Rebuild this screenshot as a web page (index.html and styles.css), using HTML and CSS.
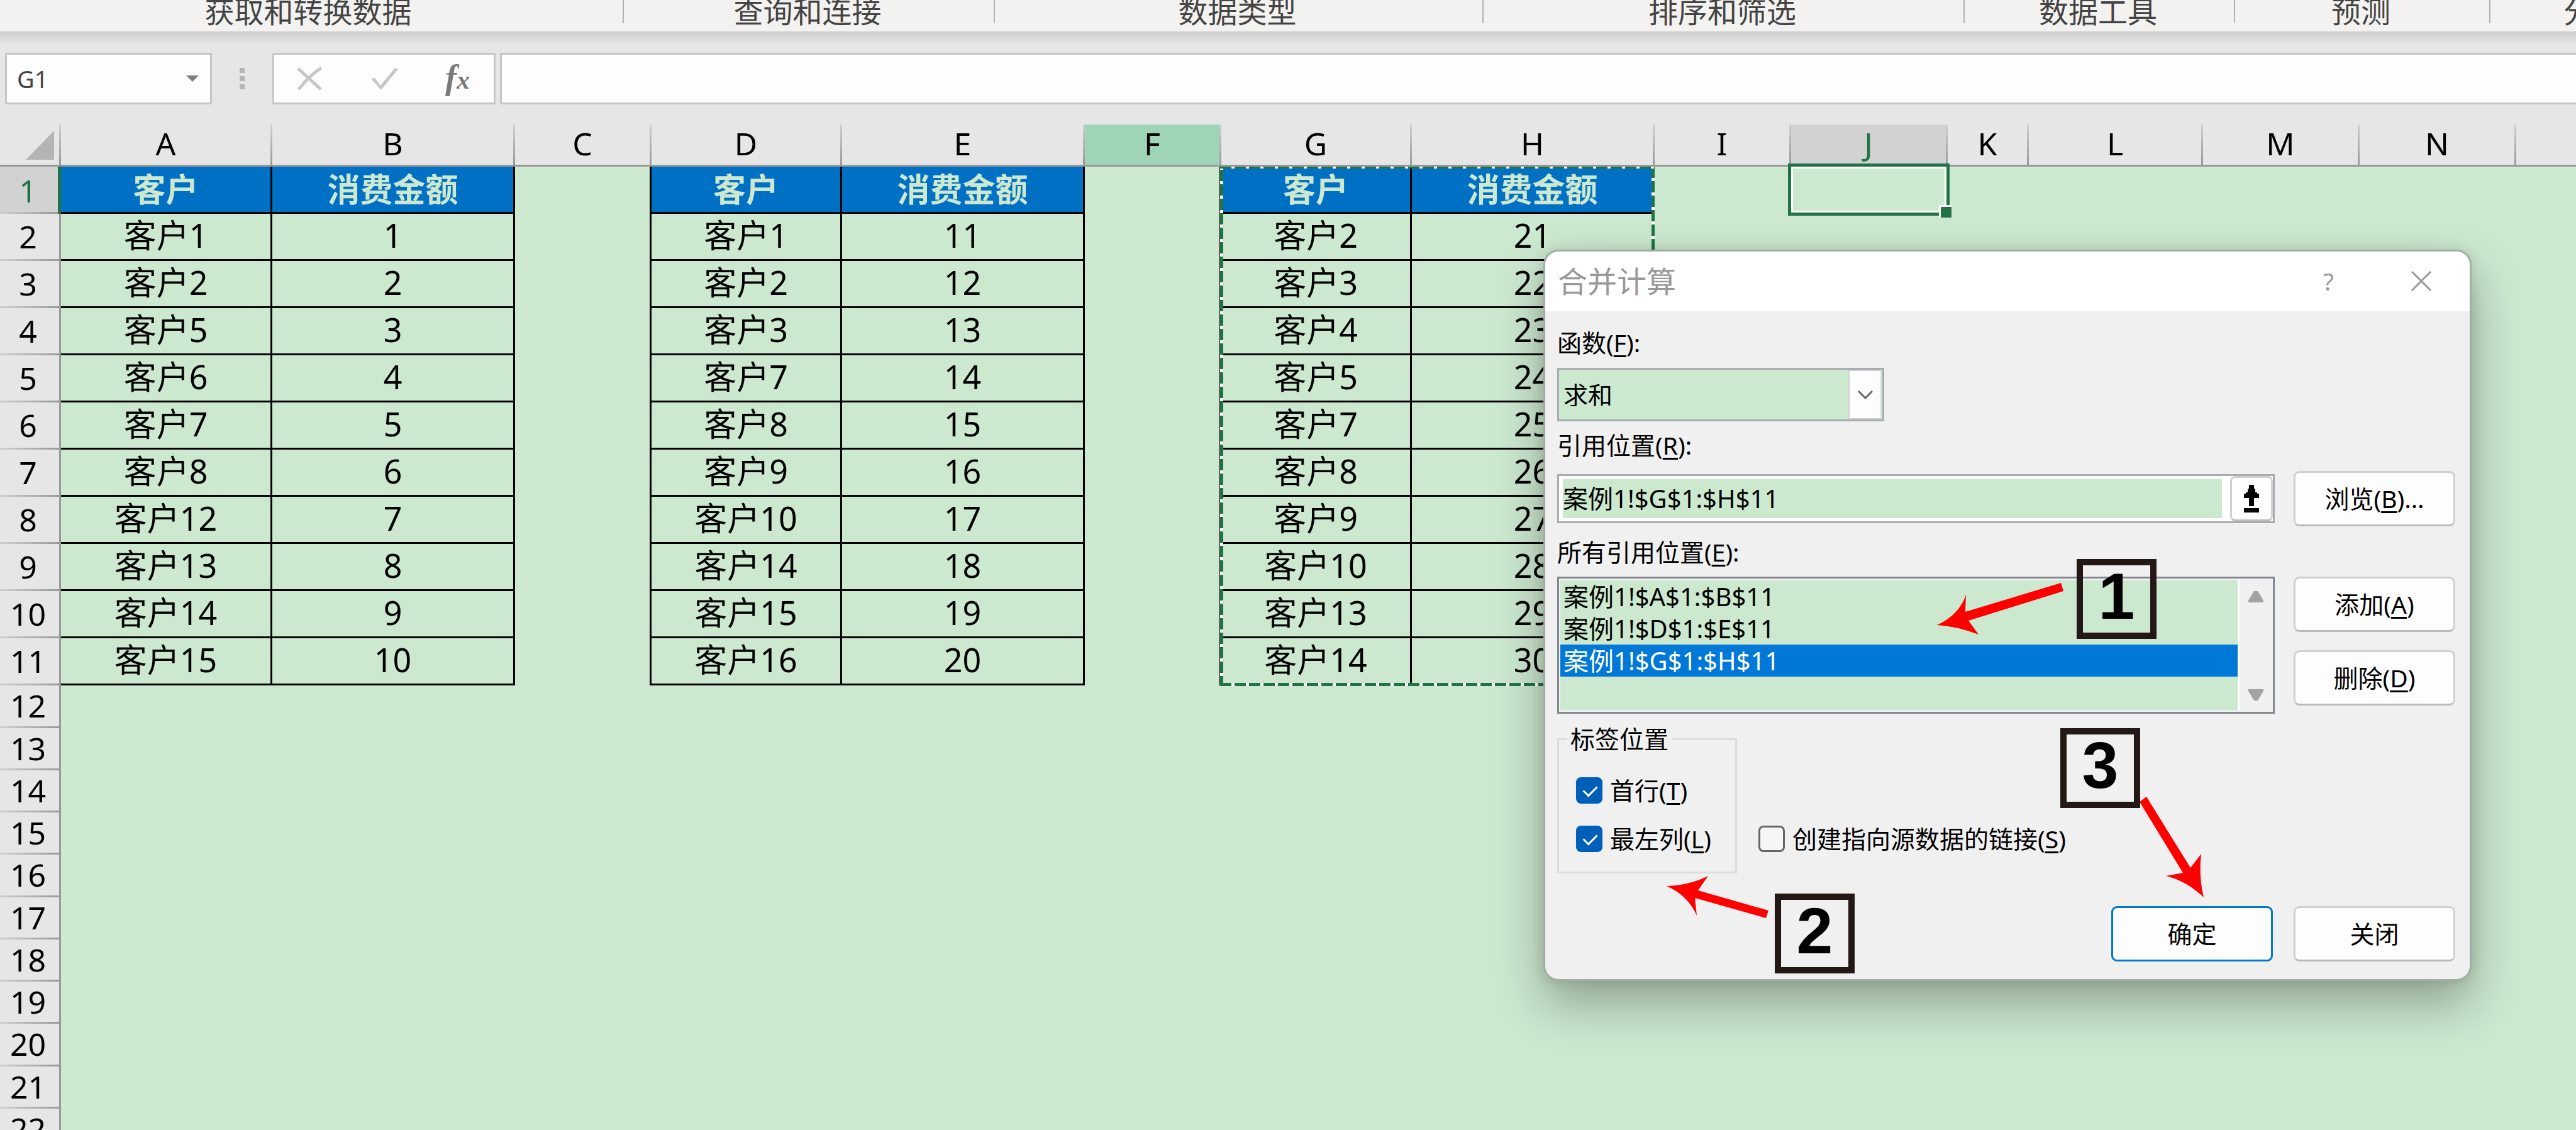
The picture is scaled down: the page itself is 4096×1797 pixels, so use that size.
FILE: index.html
```html
<!DOCTYPE html>
<html lang="zh-CN">
<head>
<meta charset="utf-8">
<title>合并计算</title>
<link rel="stylesheet" href="styles.css">
</head>
<body>
<div class="app">
  <div class="ribbon">
    <div class="group">获取和转换数据</div>
    <div class="group">查询和连接</div>
    <div class="group">数据类型</div>
    <div class="group">排序和筛选</div>
    <div class="group">数据工具</div>
    <div class="group">预测</div>
    <div class="group last">分级显示</div>
  </div>

  <div class="formula-bar">
    <div class="name-box">
      <input type="text" class="name-input" value="G1" aria-label="名称框">
      <svg class="name-caret" viewBox="0 0 20 10"><path d="M0 0H20L10 10Z" fill="#7b7f82"/></svg>
    </div>
    <div class="grip"><i></i><i></i><i></i></div>
    <div class="formula-tools">
      <button type="button" aria-label="取消"><svg width="42" height="38" viewBox="0 0 42 38"><path d="M2 3L38 36M39 2C27 9 14 22 3 36" fill="none" stroke="#c6c6c6" stroke-width="5"/></svg></button>
      <button type="button" aria-label="输入"><svg width="46" height="38" viewBox="0 0 46 38"><path d="M2 19L8 18L17 30L40 2L45 4L18 37Z" fill="#c6c6c6"/></svg></button>
      <button type="button" class="fx" aria-label="插入函数">f<span>x</span></button>
    </div>
    <input type="text" class="formula-input" aria-label="编辑栏">
  </div>

  <div class="sheet">
    <table class="grid">
      <colgroup>
        <col class="c-head"><col class="c-a"><col class="c-amount"><col class="c-gap"><col class="c-name"><col class="c-amount"><col class="c-gap"><col class="c-name"><col class="c-amount"><col class="c-gap"><col class="c-std"><col class="c-k"><col class="c-l"><col class="c-std"><col class="c-std"><col>
      </colgroup>
      <thead>
        <tr>
          <th class="corner"><svg width="45" height="46" viewBox="0 0 45 46"><path d="M45 0V46H0Z" fill="#b4b4b4"/></svg></th>
          <th>A</th><th>B</th><th>C</th><th>D</th><th>E</th><th class="hover">F</th><th>G</th><th>H</th><th>I</th><th class="active">J</th><th>K</th><th>L</th><th>M</th><th>N</th><th class="tail"></th>
        </tr>
      </thead>
      <tbody class="data">
        <tr class="titles"><th>1</th><td>客户</td><td>消费金额</td><td class="gap"></td><td>客户</td><td>消费金额</td><td class="gap"></td><td>客户</td><td>消费金额</td><td class="rest" colspan="7"></td></tr>
        <tr><th>2</th><td>客户1</td><td>1</td><td class="gap"></td><td>客户1</td><td>11</td><td class="gap"></td><td>客户2</td><td>21</td><td class="rest" colspan="7"></td></tr>
        <tr><th>3</th><td>客户2</td><td>2</td><td class="gap"></td><td>客户2</td><td>12</td><td class="gap"></td><td>客户3</td><td>22</td><td class="rest" colspan="7"></td></tr>
        <tr><th>4</th><td>客户5</td><td>3</td><td class="gap"></td><td>客户3</td><td>13</td><td class="gap"></td><td>客户4</td><td>23</td><td class="rest" colspan="7"></td></tr>
        <tr><th>5</th><td>客户6</td><td>4</td><td class="gap"></td><td>客户7</td><td>14</td><td class="gap"></td><td>客户5</td><td>24</td><td class="rest" colspan="7"></td></tr>
        <tr><th>6</th><td>客户7</td><td>5</td><td class="gap"></td><td>客户8</td><td>15</td><td class="gap"></td><td>客户7</td><td>25</td><td class="rest" colspan="7"></td></tr>
        <tr><th>7</th><td>客户8</td><td>6</td><td class="gap"></td><td>客户9</td><td>16</td><td class="gap"></td><td>客户8</td><td>26</td><td class="rest" colspan="7"></td></tr>
        <tr><th>8</th><td>客户12</td><td>7</td><td class="gap"></td><td>客户10</td><td>17</td><td class="gap"></td><td>客户9</td><td>27</td><td class="rest" colspan="7"></td></tr>
        <tr><th>9</th><td>客户13</td><td>8</td><td class="gap"></td><td>客户14</td><td>18</td><td class="gap"></td><td>客户10</td><td>28</td><td class="rest" colspan="7"></td></tr>
        <tr><th>10</th><td>客户14</td><td>9</td><td class="gap"></td><td>客户15</td><td>19</td><td class="gap"></td><td>客户13</td><td>29</td><td class="rest" colspan="7"></td></tr>
        <tr><th>11</th><td>客户15</td><td>10</td><td class="gap"></td><td>客户16</td><td>20</td><td class="gap"></td><td>客户14</td><td>30</td><td class="rest" colspan="7"></td></tr>
      </tbody>
      <tbody class="blank">
        <tr><th>12</th><td colspan="15"></td></tr>
        <tr><th>13</th><td colspan="15"></td></tr>
        <tr><th>14</th><td colspan="15"></td></tr>
        <tr><th>15</th><td colspan="15"></td></tr>
        <tr><th>16</th><td colspan="15"></td></tr>
        <tr><th>17</th><td colspan="15"></td></tr>
        <tr><th>18</th><td colspan="15"></td></tr>
        <tr><th>19</th><td colspan="15"></td></tr>
        <tr><th>20</th><td colspan="15"></td></tr>
        <tr><th>21</th><td colspan="15"></td></tr>
        <tr><th>22</th><td colspan="15"></td></tr>
      </tbody>
    </table>
    <div class="ants"></div>
    <div class="cell-cursor"></div>
  </div>
</div>

<section class="dialog" role="dialog" aria-labelledby="dialog-title">
  <header class="titlebar">
    <h1 id="dialog-title">合并计算</h1>
    <button type="button" class="title-btn" aria-label="帮助">?</button>
    <button type="button" class="title-btn" aria-label="关闭窗口"><svg width="34" height="32" viewBox="0 0 34 32"><path d="M2 1L32 31M32 1L2 31" fill="none" stroke="#999" stroke-width="3"/></svg></button>
  </header>
  <form class="dialog-body">
    <label class="caption" for="func">函数(<u>F</u>):</label>
    <div class="select-wrap">
      <select id="func"><option>求和</option></select>
      <span class="select-arrow"><svg width="24" height="14" viewBox="0 0 24 14"><path d="M1 1L12 12L23 1" fill="none" stroke="#666" stroke-width="3"/></svg></span>
    </div>

    <label class="caption after-select" for="ref">引用位置(<u>R</u>):</label>
    <div class="row ref-row">
      <div class="ref-box">
        <input type="text" id="ref" value="案例1!$G$1:$H$11">
        <button type="button" class="pick" aria-label="折叠对话框"><svg width="24" height="44" viewBox="0 0 24 44"><path d="M8 0H16V6H18V12H21V14H24V21H16V34H8V21H0V14H3V12H6V6H8ZM0 37H24V44H0Z" fill="#000"/></svg></button>
      </div>
      <button type="button" class="btn">浏览(<u>B</u>)...</button>
    </div>

    <span class="caption after-ref" id="all-refs">所有引用位置(<u>E</u>):</span>
    <div class="row list-row">
      <div class="list-box">
        <ul role="listbox" aria-labelledby="all-refs">
          <li role="option">案例1!$A$1:$B$11</li>
          <li role="option">案例1!$D$1:$E$11</li>
          <li role="option" aria-selected="true" class="selected">案例1!$G$1:$H$11</li>
        </ul>
        <div class="scrollbar">
          <svg width="24" height="18" viewBox="0 0 24 18"><path d="M9 0H15L24 15V18H0V15Z" fill="#a3a3a3"/></svg>
          <svg width="24" height="18" viewBox="0 0 24 18"><path d="M9 18H15L24 3V0H0V3Z" fill="#a3a3a3"/></svg>
        </div>
      </div>
      <div class="stack">
        <button type="button" class="btn">添加(<u>A</u>)</button>
        <button type="button" class="btn">删除(<u>D</u>)</button>
      </div>
    </div>

    <div class="options">
      <fieldset>
        <legend>标签位置</legend>
        <label class="check"><input type="checkbox" checked>首行(<u>T</u>)</label>
        <label class="check"><input type="checkbox" checked>最左列(<u>L</u>)</label>
      </fieldset>
      <label class="check link-check"><input type="checkbox">创建指向源数据的链接(<u>S</u>)</label>
    </div>

    <div class="actions">
      <button type="button" class="btn primary">确定</button>
      <button type="button" class="btn">关闭</button>
    </div>
  </form>

  <svg class="arrows" viewBox="2457 400 1470 1156" fill="#f00">
    <path d="M3277 927L3281 940L3130 987L3146 1009Q3112 996 3080 994Q3115 978 3126 946L3125 973Z"/>
    <path d="M2812 1448L2808 1460L2695 1428L2698 1456Q2684 1424 2650 1409Q2686 1408 2716 1393L2700 1416Z"/>
    <path d="M3413 1267L3402 1275L3471 1388L3444 1393Q3477 1401 3504 1427Q3496 1394 3500 1358L3483 1380Z"/>
  </svg>
  <div class="callout one">1</div>
  <div class="callout two">2</div>
  <div class="callout three">3</div>
</section>
</body>
</html>
```
FILE: styles.css
```css
* { box-sizing: border-box; }

body {
  margin: 0;
  height: 100vh;
  overflow: hidden;
  position: relative;
  background: #cce8cf;
  color: #000;
  font-family: "Noto Sans", "Noto Sans CJK SC", sans-serif;
}

button, input, select { font: inherit; color: inherit; margin: 0; padding: 0; }
svg { display: block; flex: none; }

.app { height: 100vh; overflow: hidden; display: flex; flex-direction: column; }

/* Ribbon group captions */
.ribbon {
  flex: none;
  display: grid;
  grid-template-columns: 992px 590px 777px 765px 430px 406px 1fr;
  height: 50px;
  overflow: hidden;
  background: #f3f2f1;
  color: #444;
  font-size: 47px;
  line-height: 36px;
}
.group {
  height: 37px;
  padding-right: 4px;
  border-right: 2px solid #b4b2b0;
  text-align: center;
  white-space: nowrap;
}
.group:first-child { padding-right: 10px; }
.group.last { border: 0; padding-left: 116px; text-align: left; }

/* Formula bar */
.formula-bar {
  flex: none;
  display: flex;
  height: 148px;
  padding: 34px 0 32px 8px;
  background: linear-gradient(#cccccc, #e6e6e6 20px);
  font-size: 38px;
}
.name-box {
  display: flex;
  align-items: center;
  width: 329px;
  padding: 0 18px 0 16px;
  background: #fdfdfd;
  border: 3px solid #c6c6c6;
  color: #444;
}
.name-input { flex: 1; min-width: 0; border: 0; background: none; }
.name-caret { width: 20px; height: 10px; }
.grip {
  display: flex;
  flex-direction: column;
  justify-content: center;
  align-items: center;
  gap: 5px;
  width: 96px;
}
.grip i { width: 8px; height: 8px; background: #b4b4b4; }
.formula-tools {
  display: flex;
  justify-content: space-between;
  align-items: center;
  width: 355px;
  padding: 0 38px 0 36px;
  background: #fdfdfd;
  border: 3px solid #c6c6c6;
}
.formula-tools button { border: 0; background: none; }
.formula-tools .fx {
  font: italic bold 54px/60px "Liberation Serif", serif;
  color: #7a7a7a;
}
.fx span { font-size: 42px; }
.formula-input {
  flex: 1;
  margin-left: 7px;
  background: #fdfdfd;
  border: 3px solid #c6c6c6;
  border-right: 0;
}

/* Worksheet */
.sheet { position: relative; flex: 1; min-height: 0; overflow: hidden; }
.grid { width: 100%; table-layout: fixed; border-collapse: separate; border-spacing: 0; }
.c-head { width: 97px; }
.c-a { width: 336px; }
.c-name { width: 303px; }
.c-amount { width: 386px; }
.c-gap { width: 217px; }
.c-std { width: 249px; }
.c-k { width: 129px; }
.c-l { width: 277px; }

.grid th, .grid td { padding: 0; text-align: center; vertical-align: middle; white-space: nowrap; }
.grid th { font-weight: 400; font-size: 50px; line-height: 56px; }
.grid td { font-size: 52px; line-height: 60px; }

.grid thead th {
  height: 67px;
  padding: 0 3px 5px 0;
  border-bottom: 3px solid #999;
  background: linear-gradient(#cfcfcf, #999) right / 3px 100% no-repeat #e6e6e6;
}
.grid thead .corner { padding: 8px 11px 6px 41px; }
.grid thead .hover { background-color: #9fd5b7; }
.grid thead .active { background-color: #d2d2d2; color: #217346; }
.grid thead .tail { background: #e6e6e6; }

.grid tbody th {
  padding: 0 5px 4px 0;
  border-right: 3px solid #999;
  background: linear-gradient(to right, #cfcfcf, #999) bottom / 100% 3px no-repeat #e6e6e6;
}
.data tr { height: 75px; }
.data td { padding-bottom: 4px; border-right: 3px solid #000; border-bottom: 3px solid #000; }
.data .gap { border-bottom: 0; }
.data .rest { border: 0; }
.data .titles th {
  padding-right: 3px;
  padding-bottom: 0;
  border-right: 5px solid #217346;
  background-color: #d2d2d2;
  color: #217346;
}
.data .titles td { padding-bottom: 0; background: #0070c4; color: #cce8cf; font-weight: 700; }
.data .titles .gap, .data .titles .rest { background: none; }
.blank tr { height: 67px; }
.blank tr:nth-child(4n + 1) { height: 68px; }

/* Moving border round the copied range G1:H11 */
.ants {
  position: absolute;
  left: 1940px;
  top: 67px;
  width: 691px;
  height: 826px;
  background:
    repeating-linear-gradient(to right, #217346 0 18px, #fff 18px 23px) top / 100% 3px no-repeat,
    repeating-linear-gradient(to right, #217346 0 18px, #fff 18px 23px) bottom / 100% 5px no-repeat,
    repeating-linear-gradient(#fff 0 5px, #217346 5px 23px) left / 5px 100% no-repeat,
    repeating-linear-gradient(#217346 0 18px, #fff 18px 23px) right / 5px 100% no-repeat;
}

/* Active cell J1 with its fill handle */
.cell-cursor {
  position: absolute;
  left: 2843px;
  top: 62px;
  width: 257px;
  height: 83px;
  border: 5px solid #217346;
  box-shadow: inset 0 0 0 3px #fff;
}
.cell-cursor::after {
  content: "";
  position: absolute;
  right: -8px;
  bottom: -8px;
  width: 17px;
  height: 17px;
  background: #217346;
  border: solid #fff;
  border-width: 3px 0 0 3px;
}

/* Dialog */
.dialog {
  position: absolute;
  left: 2454px;
  top: 397px;
  width: 1476px;
  border: 3px solid #a0afa2;
  border-radius: 24px;
  background: #f0f0f0;
  background-clip: padding-box;
  box-shadow: 0 36px 76px rgba(0, 0, 0, 0.3), 0 0 20px rgba(0, 0, 0, 0.12);
  font-size: 39px;
  line-height: 36px;
}
.titlebar {
  display: flex;
  align-items: center;
  height: 95px;
  padding: 0 60px 2px 20px;
  background: #fff;
  border-radius: 21px 21px 0 0;
  color: #999;
}
.titlebar h1 { flex: 1; margin: 0; font-size: 47px; font-weight: 400; line-height: 50px; }
.title-btn {
  display: flex;
  border: 0;
  background: none;
  margin-left: 122px;
}
.dialog-body { padding: 32px 23px 28px 19px; }
.caption { display: block; height: 40px; }
u { text-underline-offset: 5px; text-decoration-thickness: 3px; text-decoration-skip-ink: none; }

.select-wrap {
  display: flex;
  width: 520px;
  height: 85px;
  margin-top: 18px;
  border: 3px solid #a9abb1;
  background: #cce8cf;
}
.select-wrap select {
  flex: 1;
  min-width: 0;
  appearance: none;
  padding-left: 7px;
  border: 0;
  border-radius: 0;
  background: none;
}
.select-arrow {
  display: flex;
  align-items: center;
  justify-content: center;
  width: 51px;
  margin-right: 3px;
  background: #fdfdfd;
  border: solid #cfcfcf;
  border-width: 2px 0 2px 2px;
}
.after-select { margin-top: 20px; }

.row { display: flex; gap: 30px; }
.ref-row { align-items: center; margin-top: 19px; }
.ref-box {
  flex: 1;
  display: flex;
  height: 78px;
  border: 3px solid #a9abb1;
  background: #fff;
}
.ref-box input {
  flex: 1;
  min-width: 0;
  margin: 5px 13px 5px 6px;
  padding-bottom: 5px;
  border: 0;
  background: #cce8cf;
  font-size: 40px;
}
.pick {
  display: flex;
  align-items: center;
  justify-content: center;
  width: 68px;
  border: 3px solid #d0d0d0;
  border-bottom-color: #bbb;
  border-radius: 8px;
  background: #fdfdfd;
}

.btn {
  flex: none;
  width: 257px;
  height: 88px;
  border: 3px solid #d0d0d0;
  border-bottom-color: #bababa;
  border-radius: 9px;
  background: #fdfdfd;
  text-align: center;
}
.btn.primary { border-color: #0078d4; }

.after-ref { margin-top: 23px; }
.list-row { margin-top: 17px; }
.list-box {
  flex: 1;
  display: flex;
  height: 218px;
  padding: 3px 0 3px 2px;
  border: 3px solid #828790;
}
.list-box ul {
  flex: 1;
  margin: 0;
  padding: 0;
  list-style: none;
  background: #cce8cf;
  font-size: 40px;
  line-height: 51px;
}
.list-box li { height: 51px; padding-left: 5px; }
.list-box .selected { background: #0078d7; color: #fff; }
.scrollbar {
  display: flex;
  flex-direction: column;
  justify-content: space-between;
  align-items: center;
  width: 56px;
  padding: 17px 2px 15px 0;
  border-left: 3px solid #fff;
}
.stack { display: flex; flex-direction: column; gap: 29px; }

.options { display: flex; align-items: flex-end; gap: 34px; margin-top: 20px; }
fieldset {
  width: 286px;
  margin: 0;
  padding: 41px 0 31px 27px;
  border: 3px solid #dcdcdc;
}
legend { margin-left: -14px; padding: 0 5px; line-height: 40px; }
.check { display: flex; align-items: center; height: 42px; white-space: nowrap; }
.check + .check { margin-top: 35px; }
.check input {
  appearance: none;
  flex: none;
  position: relative;
  width: 42px;
  height: 42px;
  margin-right: 12px;
  border: 3px solid #666;
  border-radius: 8px;
  background: #f6f6f6;
}
.check input:checked { border-color: #005fb8; background: #005fb8; }
.check input:checked::after {
  content: "";
  position: absolute;
  left: 13px;
  top: 6px;
  width: 10px;
  height: 18px;
  border: solid #fff;
  border-width: 0 3px 3px 0;
  transform: rotate(45deg);
}
.link-check { margin-bottom: 34px; }

.actions { display: flex; justify-content: flex-end; gap: 33px; margin-top: 52px; }

/* Step annotations drawn over the dialog */
.arrows { position: absolute; left: 0; top: 0; width: 1470px; height: 1156px; }
.callout {
  position: absolute;
  width: 127px;
  height: 127px;
  border: 10px solid #231815;
  font: bold 104px/98px "Liberation Sans", sans-serif;
  text-align: center;
}
.one { left: 845px; top: 489px; }
.two { left: 365px; top: 1021px; }
.three { left: 819px; top: 758px; }
```
